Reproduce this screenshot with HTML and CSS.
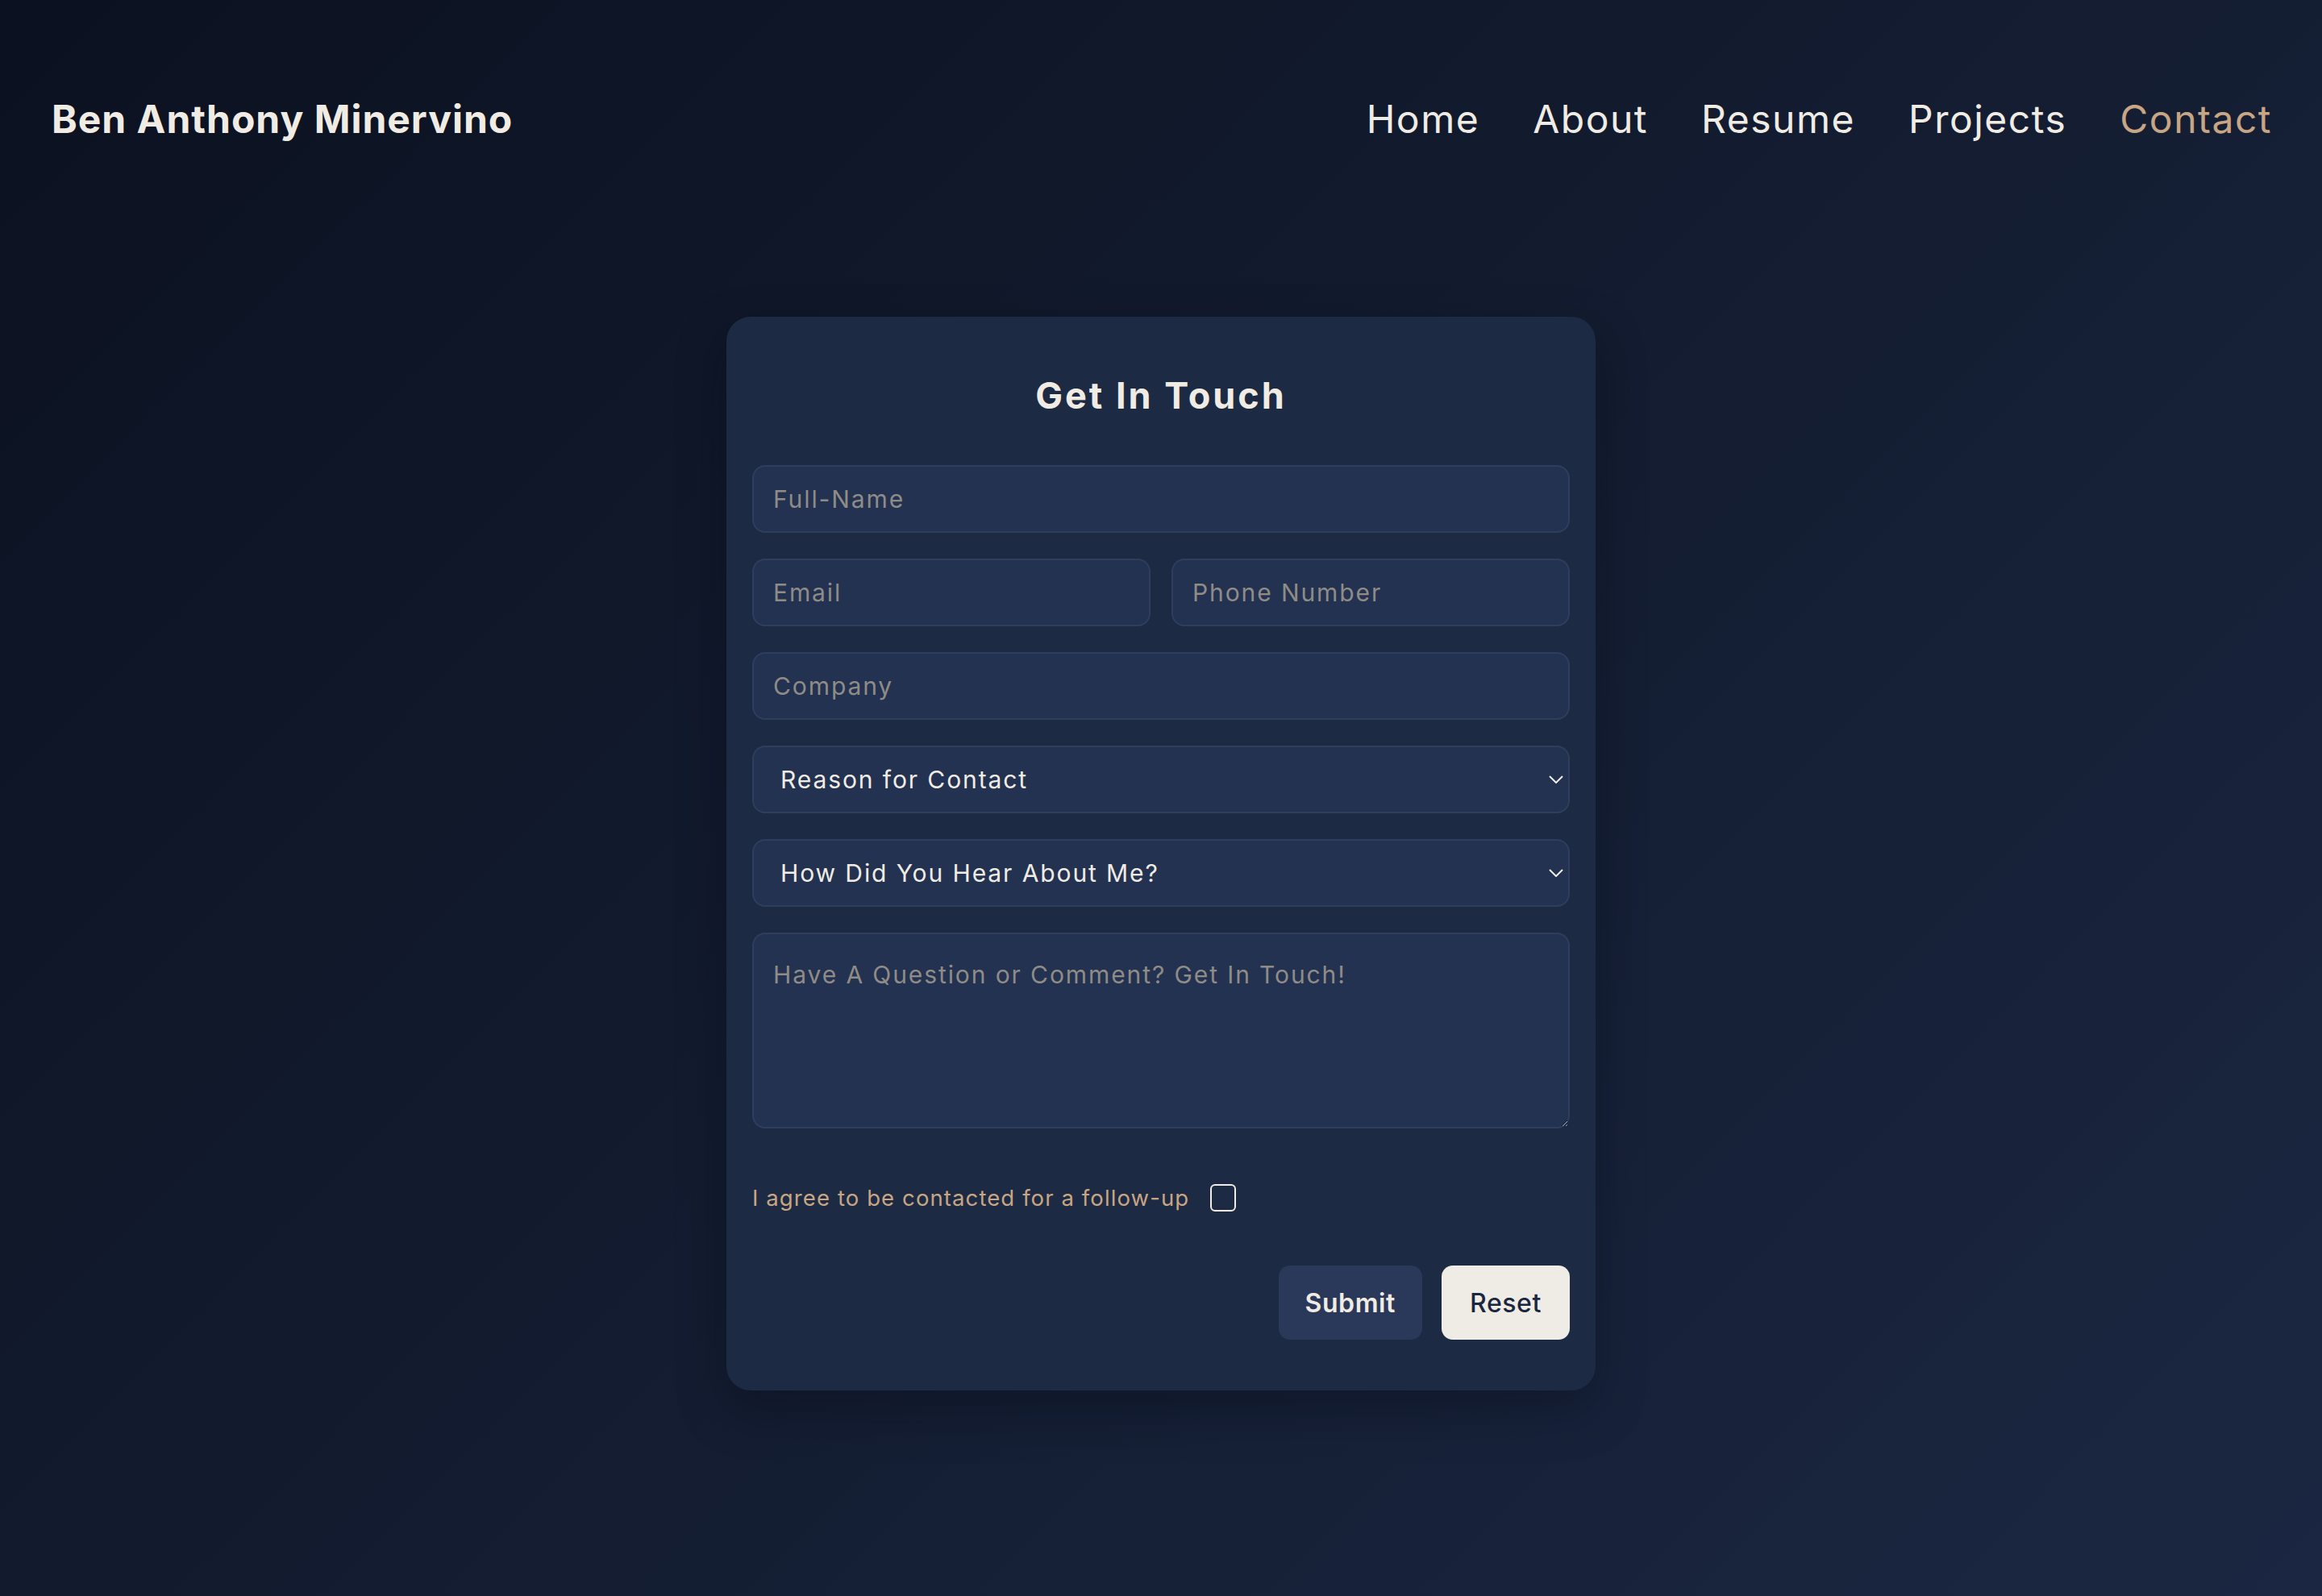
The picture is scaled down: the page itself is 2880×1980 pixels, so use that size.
FILE: index.html
```html
<!DOCTYPE html>
<html lang="en">
<head>
<meta charset="utf-8">
<title>Contact | Ben Anthony Minervino</title>
<link rel="stylesheet" href="styles.css">
</head>
<body>
<header class="site-header">
  <a class="brand" href="#">Ben Anthony Minervino</a>
  <nav class="nav">
    <a class="nav-link" href="#">Home</a>
    <a class="nav-link" href="#">About</a>
    <a class="nav-link" href="#">Resume</a>
    <a class="nav-link" href="#">Projects</a>
    <a class="nav-link nav-link-active" href="#">Contact</a>
  </nav>
</header>
<main class="main">
  <section class="card">
    <h1 class="card-title">Get In Touch</h1>
    <form class="form">
      <input class="field" type="text" placeholder="Full-Name">
      <div class="field-row">
        <input class="field" type="email" placeholder="Email">
        <input class="field" type="tel" placeholder="Phone Number">
      </div>
      <input class="field" type="text" placeholder="Company">
      <div class="select-wrap">
        <select class="field select">
          <option>Reason for Contact</option>
        </select>
        <svg class="chevron" viewBox="0 0 18 10" width="18" height="10"><path d="M1 1l8 8 8-8" fill="none" stroke="#f0ece4" stroke-width="2"/></svg>
      </div>
      <div class="select-wrap">
        <select class="field select">
          <option>How Did You Hear About Me?</option>
        </select>
        <svg class="chevron" viewBox="0 0 18 10" width="18" height="10"><path d="M1 1l8 8 8-8" fill="none" stroke="#f0ece4" stroke-width="2"/></svg>
      </div>
      <textarea class="field textarea" placeholder="Have A Question or Comment? Get In Touch!"></textarea>
      <label class="agree">
        <span class="agree-text">I agree to be contacted for a follow-up</span>
        <span class="checkbox"></span>
      </label>
      <div class="actions">
        <button class="btn btn-submit" type="button">Submit</button>
        <button class="btn btn-reset" type="button">Reset</button>
      </div>
    </form>
  </section>
</main>
</body>
</html>
```
FILE: styles.css
```css
* { box-sizing: border-box; }

html, body { margin: 0; padding: 0; }

body {
  min-height: 1980px;
  font-family: "Inter", "Open Sans", sans-serif;
  color: #f0ece4;
  background: linear-gradient(135deg, #0b1120 0%, #131c30 50%, #1b2742 100%);
}

.site-header {
  height: 296px;
  display: flex;
  align-items: center;
  justify-content: space-between;
  padding: 0 62px 0 64px;
}

.brand {
  font-size: 48px;
  line-height: 72px;
  font-weight: 700;
  color: #f0ece4;
  text-decoration: none;
  letter-spacing: 1px;
}

.nav {
  display: flex;
  gap: 66px;
}

.nav-link {
  font-size: 48px;
  line-height: 72px;
  font-weight: 400;
  color: #f0ece4;
  text-decoration: none;
  letter-spacing: 1.5px;
}

.nav-link-active { color: #c8a583; }

.main {
  padding-top: 97px;
  display: flex;
  justify-content: center;
}

.card {
  width: 1078px;
  background: #1c2a43;
  border-radius: 30px;
  padding: 64px 32px 63px;
  box-shadow: 0 24px 60px rgba(5, 10, 20, 0.35);
}

.card-title {
  margin: 0 0 52px;
  text-align: center;
  font-size: 45px;
  line-height: 68px;
  font-weight: 700;
  color: #f0ece4;
  letter-spacing: 3px;
}

.form {
  display: flex;
  flex-direction: column;
  gap: 32px;
}

.field-row {
  display: grid;
  grid-template-columns: 1fr 1fr;
  gap: 26px;
}

.field {
  width: 100%;
  height: 84px;
  margin: 0;
  padding: 0 24px;
  background: #233250;
  border: 2px solid #2f3e5e;
  border-radius: 16px;
  font-family: "Inter", "Open Sans", sans-serif;
  font-size: 30px;
  letter-spacing: 1.9px;
  color: #f0ece4;
  outline: none;
}

.field::placeholder { color: #8f8c88; opacity: 1; }

.select-wrap { position: relative; }

.select {
  appearance: none;
  -webkit-appearance: none;
  padding-left: 33px;
  color: #f0ece4;
}

.chevron {
  position: absolute;
  right: 8px;
  top: 37px;
  pointer-events: none;
}

.textarea {
  height: 243px;
  padding: 28px 24px 24px;
  line-height: 1.5;
  resize: vertical;
}

.agree {
  margin-top: 34px;
  display: flex;
  align-items: center;
  gap: 26px;
}

.agree-text {
  font-size: 27.5px;
  line-height: 40px;
  letter-spacing: 1.1px;
  color: #c8a583;
}

.checkbox {
  width: 32px;
  height: 34px;
  border: 2px solid #f0ece4;
  border-radius: 6px;
}

.actions {
  margin-top: 32px;
  display: flex;
  justify-content: flex-end;
  gap: 24px;
}

.btn {
  height: 92px;
  padding: 0 33px;
  border: none;
  border-radius: 14px;
  font-family: "Inter", "Open Sans", sans-serif;
  font-size: 32px;
  letter-spacing: 0.6px;
  cursor: pointer;
}

.btn-submit {
  background: #2a3859;
  color: #f0ece4;
  font-weight: 600;
}

.btn-reset {
  background: #efece6;
  color: #1b2740;
  font-weight: 500;
  padding: 0 35px;
}
```
